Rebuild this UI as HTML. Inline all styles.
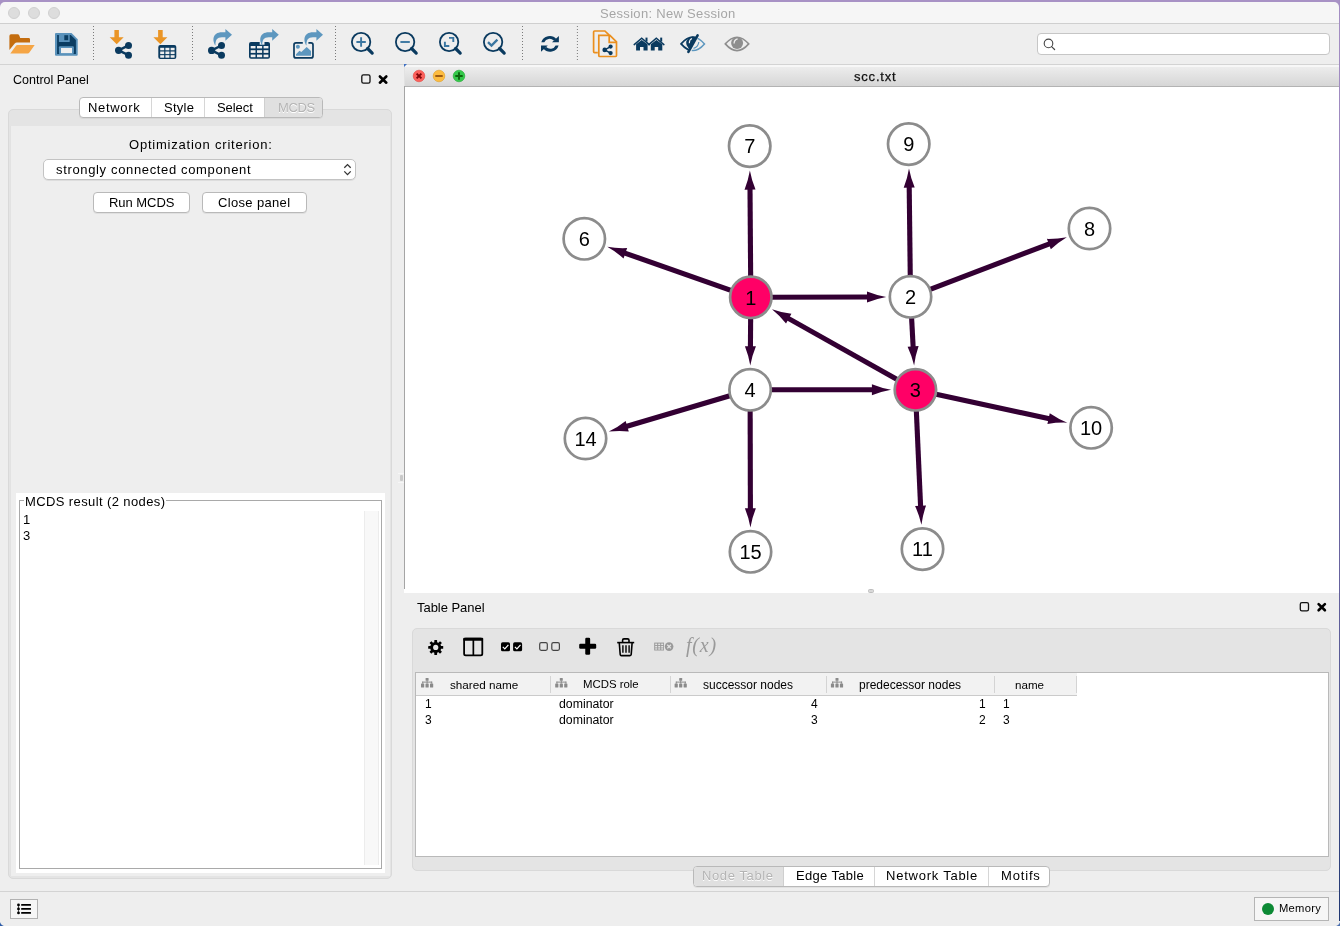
<!DOCTYPE html>
<html><head><meta charset="utf-8">
<style>
*{margin:0;padding:0;box-sizing:border-box}
html,body{-webkit-font-smoothing:antialiased;width:1340px;height:926px;overflow:hidden;background:#eeeeee;font-family:"Liberation Sans",sans-serif;color:#000;position:relative}
.a{position:absolute}
.t{position:absolute;white-space:nowrap;line-height:1;will-change:transform}
.tl{position:absolute;width:12px;height:12px;border-radius:50%;background:#dddddd;border:1px solid #d0d0d0}
.sep{position:absolute;top:36px;width:1px;height:32px;background:repeating-linear-gradient(#7d7d7d 0 1px,transparent 1px 4px)}
.btn{position:absolute;background:#fff;border:1px solid #b9b9b9;border-radius:4px;box-shadow:0 1px 0 rgba(0,0,0,.06)}
</style></head><body>
<!-- desktop edges -->
<div class="a" style="left:0;top:0;width:1340px;height:8px;background:#a892c5"></div>
<div class="a" style="left:1339px;top:0;width:1px;height:926px;background:linear-gradient(#a48ec3 0,#9a86bd 25%,#5f5d98 35%,#6a64a0 60%,#4d5590 80%,#1d3570 100%)"></div>
<!-- title bar -->
<div class="a" style="left:0;top:2px;width:1339px;height:22px;background:#f6f6f6;border-radius:5px 5px 0 0"></div>
<div class="a" style="left:0;top:23px;width:1339px;height:1px;background:#cfcfcf"></div>
<div class="tl" style="left:8px;top:7px"></div>
<div class="tl" style="left:28px;top:7px"></div>
<div class="tl" style="left:48px;top:7px"></div>
<div class="t" style="left:600.2px;top:6.8px;font-size:13px;letter-spacing:0.31px;color:#a6a6a6">Session: New Session</div>
<!-- toolbar -->
<div class="a" style="left:0;top:64px;width:1339px;height:1px;background:#d3d3d3"></div>
<div id="toolbar"></div>
<div class="a" style="left:1037px;top:33px;width:293px;height:22px;background:#fff;border:1px solid #c6c6c6;border-radius:4px"></div>
<svg class="a" style="left:1040px;top:36px" width="20" height="16" viewBox="1040 36 20 16"><circle cx="1048.5" cy="43.4" r="4.3" fill="none" stroke="#444" stroke-width="1.1"/><path d="M1051.6,46.6 L1054.6,49.5" stroke="#444" stroke-width="1.2" stroke-linecap="round"/></svg>

<!-- control panel -->
<div class="t" style="left:13px;top:74px;font-size:12.5px">Control Panel</div>
<div class="a" style="left:8px;top:109px;width:384px;height:770px;border:1px solid #d9d9d9;border-radius:5px;background:#e4e4e4"></div>
<div class="a" style="left:10px;top:126px;width:380px;height:750px;background:#eeeeee;border-left:1px solid #e2e2e2"></div>

<!-- network view -->
<div class="a" style="left:404px;top:65px;width:935px;height:22px;background:linear-gradient(#efefef,#d6d6d6);border-bottom:1px solid #b3b3b3"></div>
<div class="a" style="left:404px;top:87px;width:935px;height:506px;background:#fff"></div>
<div class="a" style="left:404px;top:86px;width:1px;height:503px;background:#a5a5a5"></div>
<div class="a" style="left:404px;top:65px;width:1px;height:21px;background:#e2e2e2"></div>

<!-- table panel -->
<div class="t" style="left:417.3px;top:601.2px;font-size:13px;letter-spacing:-0.04px">Table Panel</div>
<div class="a" style="left:412px;top:628px;width:919px;height:243px;border:1px solid #d9d9d9;border-radius:5px;background:#e4e4e4"></div>
<div class="a" style="left:415px;top:672px;width:914px;height:185px;background:#fff;border:1px solid #b9b9b9"></div>

<!-- status bar -->
<div class="a" style="left:0;top:891px;width:1339px;height:1px;background:#d3d3d3"></div>
<div class="a" style="left:0;top:921px;width:5px;height:5px;background:radial-gradient(circle at 5px 0,#eeeeee 4.6px,#2f5da8 5.4px)"></div>
<div class="a" style="left:1335px;top:921px;width:5px;height:5px;background:radial-gradient(circle at 0 0,#eeeeee 4.6px,#4a6fb0 5.4px)"></div>
<!--BEGIN GRAPH-->
<svg class="a" style="left:0;top:0;will-change:transform" width="1340" height="926" viewBox="0 0 1340 926">
<g fill="#330033" stroke="none">
<path d="M753.35,297.28 L752.55,187.58 L747.45,187.62 L748.25,297.32Z"/>
<path d="M749.88,170.40 Q751.60,179.99 755.52,189.56 L744.52,189.64 Q748.30,180.01 749.88,170.40Z"/>
<path d="M751.65,294.89 L624.30,250.15 L622.61,254.96 L749.95,299.71Z"/>
<path d="M607.23,246.86 Q616.83,248.48 627.16,248.03 L623.52,258.41 Q615.74,251.59 607.23,246.86Z"/>
<path d="M750.81,299.85 L869.01,299.48 L868.99,294.38 L750.79,294.75Z"/>
<path d="M886.20,296.88 Q876.61,298.56 867.02,302.44 L866.98,291.44 Q876.60,295.26 886.20,296.88Z"/>
<path d="M748.25,297.28 L747.86,348.28 L752.96,348.32 L753.35,297.32Z"/>
<path d="M750.28,365.50 Q748.71,355.89 744.93,346.26 L755.93,346.34 Q752.01,355.91 750.28,365.50Z"/>
<path d="M913.05,296.77 L911.74,185.57 L906.64,185.63 L907.95,296.83Z"/>
<path d="M908.99,168.40 Q910.75,177.98 914.71,187.53 L903.71,187.66 Q907.45,178.02 908.99,168.40Z"/>
<path d="M911.41,299.18 L1051.64,245.68 L1049.82,240.91 L909.59,294.42Z"/>
<path d="M1066.80,237.16 Q1058.42,242.13 1050.82,249.15 L1046.90,238.87 Q1057.24,239.04 1066.80,237.16Z"/>
<path d="M907.95,296.93 L910.67,348.49 L915.76,348.22 L913.05,296.67Z"/>
<path d="M914.12,365.53 Q911.97,356.03 907.62,346.65 L918.60,346.07 Q915.26,355.86 914.12,365.53Z"/>
<path d="M916.65,387.58 L788.23,315.41 L785.73,319.85 L914.15,392.02Z"/>
<path d="M771.98,309.20 Q781.16,312.47 791.42,313.82 L786.03,323.41 Q779.54,315.35 771.98,309.20Z"/>
<path d="M914.86,392.29 L1050.00,421.52 L1051.08,416.53 L915.94,387.31Z"/>
<path d="M1067.35,422.66 Q1057.62,422.25 1047.42,423.98 L1049.75,413.23 Q1058.31,419.02 1067.35,422.66Z"/>
<path d="M912.85,389.91 L918.10,507.75 L923.20,507.53 L917.95,389.69Z"/>
<path d="M921.42,524.82 Q919.34,515.31 915.07,505.89 L926.06,505.40 Q922.64,515.16 921.42,524.82Z"/>
<path d="M750.10,392.35 L873.90,392.35 L873.90,387.25 L750.10,387.25Z"/>
<path d="M891.10,389.80 Q881.50,391.45 871.90,395.30 L871.90,384.30 Q881.50,388.15 891.10,389.80Z"/>
<path d="M749.38,387.35 L624.57,424.28 L626.02,429.17 L750.82,392.25Z"/>
<path d="M608.80,431.61 Q617.54,427.30 625.65,420.88 L628.77,431.43 Q618.48,430.46 608.80,431.61Z"/>
<path d="M747.55,389.81 L747.85,510.31 L752.95,510.29 L752.65,389.79Z"/>
<path d="M750.44,527.50 Q748.77,517.90 744.89,508.31 L755.89,508.29 Q752.07,517.90 750.44,527.50Z"/>
</g>
<circle cx="750.8" cy="297.3" r="20.7" fill="#ff0066" stroke="#8c8c8c" stroke-width="2.7"/>
<circle cx="910.5" cy="296.8" r="20.7" fill="#ffffff" stroke="#8c8c8c" stroke-width="2.7"/>
<circle cx="915.4" cy="389.8" r="20.7" fill="#ff0066" stroke="#8c8c8c" stroke-width="2.7"/>
<circle cx="750.1" cy="389.8" r="20.7" fill="#ffffff" stroke="#8c8c8c" stroke-width="2.7"/>
<circle cx="584.3" cy="238.8" r="20.7" fill="#ffffff" stroke="#8c8c8c" stroke-width="2.7"/>
<circle cx="749.7" cy="146.1" r="20.7" fill="#ffffff" stroke="#8c8c8c" stroke-width="2.7"/>
<circle cx="1089.5" cy="228.5" r="20.7" fill="#ffffff" stroke="#8c8c8c" stroke-width="2.7"/>
<circle cx="908.7" cy="144.1" r="20.7" fill="#ffffff" stroke="#8c8c8c" stroke-width="2.7"/>
<circle cx="1091.1" cy="427.8" r="20.7" fill="#ffffff" stroke="#8c8c8c" stroke-width="2.7"/>
<circle cx="922.5" cy="549.1" r="20.7" fill="#ffffff" stroke="#8c8c8c" stroke-width="2.7"/>
<circle cx="585.5" cy="438.5" r="20.7" fill="#ffffff" stroke="#8c8c8c" stroke-width="2.7"/>
<circle cx="750.5" cy="551.8" r="20.7" fill="#ffffff" stroke="#8c8c8c" stroke-width="2.7"/>
<g font-family="Liberation Sans" font-size="20" text-anchor="middle" fill="#000">
<text x="750.8" y="304.5">1</text>
<text x="910.5" y="304.0">2</text>
<text x="915.4" y="397.0">3</text>
<text x="750.1" y="397.0">4</text>
<text x="584.3" y="246.0">6</text>
<text x="749.7" y="153.3">7</text>
<text x="1089.5" y="235.7">8</text>
<text x="908.7" y="151.3">9</text>
<text x="1091.1" y="435.0">10</text>
<text x="922.5" y="556.3">11</text>
<text x="585.5" y="445.7">14</text>
<text x="750.5" y="559.0">15</text>
</g></svg>
<!--END GRAPH-->
<!--BEGIN TOOLBAR-->
<svg class="a" style="left:0;top:24px" width="780" height="40" viewBox="0 24 780 40">
<defs>
<g id="share"><circle cx="0" cy="0" r="3.6"/><circle cx="9.9" cy="-4.9" r="3.5"/><circle cx="9.9" cy="4.9" r="3.5"/><path d="M0,0 L9.9,-4.9 M0,0 L9.9,4.9" stroke="#0a3a5f" stroke-width="2.4"/></g>
<g id="tbl"><rect x="0" y="0" width="18" height="14" rx="2" fill="#0a3a5f"/>
<g fill="#eeeeee"><rect x="1.9" y="2.8" width="4" height="2.5"/><rect x="7.1" y="2.8" width="4" height="2.5"/><rect x="12.3" y="2.8" width="4" height="2.5"/>
<rect x="1.9" y="6.5" width="4" height="2.6"/><rect x="7.1" y="6.5" width="4" height="2.6"/><rect x="12.3" y="6.5" width="4" height="2.6"/>
<rect x="1.9" y="10.2" width="4" height="2.5"/><rect x="7.1" y="10.2" width="4" height="2.5"/><rect x="12.3" y="10.2" width="4" height="2.5"/></g></g>
<path id="curv" d="M0,0 C-3.3,-4.6 -3.5,-13.3 6.5,-13.3 L9.9,-13.3 L9.9,-16.6 L16.5,-10.8 L9.9,-4.8 L9.9,-8.3 L6.5,-8.3 C1.5,-8.3 -0.2,-5.6 0,0 Z"/>
<path id="dots" d="M0,26 V60" stroke="#7a7a7a" stroke-width="1" stroke-dasharray="1 2"/>
</defs>
<!-- folder -->
<path d="M9.4,36 Q9.4,34.3 11,34.3 L17.6,34.3 Q18.8,34.3 19.3,35.5 L20.2,37.9 L28.6,37.9 Q30,37.9 30,39.3 L30,42.6 L17,42.6 Q15.5,42.6 14.5,43.8 L9.4,50 Z" fill="#c46d0f"/>
<path d="M17.5,45 L34.7,45 L29.4,52.4 Q28.8,53.4 27.5,53.4 L10.3,53.4 L15.8,46 Q16.4,45 17.5,45 Z" fill="#f5a545"/>
<!-- floppy -->
<path d="M55,34 Q55,33 56,33 L71.5,33 L77.7,39.3 L77.7,54.8 Q77.7,55.8 76.7,55.8 L56,55.8 Q55,55.8 55,54.8 Z" fill="#5a92bb"/>
<path d="M57.1,34.9 L70.8,34.9 L75.9,40 L75.9,54 L57.1,54 Z" fill="#0b3d62"/>
<rect x="58.9" y="34.9" width="10.8" height="7.1" rx="0.6" fill="#5a92bb"/>
<rect x="64.3" y="35.2" width="3.9" height="5" fill="#0b3d62"/>
<rect x="58.9" y="46.2" width="15" height="7.8" rx="1" fill="#5a92bb"/>
<rect x="61" y="48" width="11" height="5.1" fill="#efefef"/>
<use href="#dots" x="93.5"/>
<!-- import network -->
<path d="M114.4,29.9 H118.9 V37.3 H123.7 L116.7,44.2 L109.7,37.3 H114.4 Z" fill="#ea9526"/>
<g fill="#0a3a5f"><use href="#share" x="118.6" y="50.3"/></g>
<!-- import table -->
<path d="M158.1,29.9 H162.7 V37.3 H167.4 L160.4,44.2 L153.4,37.3 H158.1 Z" fill="#ea9526"/>
<use href="#tbl" x="158.3" y="45"/>
<use href="#dots" x="192.5"/>
<!-- export network -->
<g fill="#0a3a5f"><use href="#share" x="211.6" y="50.4"/></g>
<use href="#curv" x="215.5" y="45.6" fill="#5d97bf"/>
<!-- export table -->
<rect x="249" y="42.1" width="21" height="16.7" rx="2" fill="#0a3a5f"/>
<g fill="#eeeeee"><rect x="250.7" y="46" width="4.8" height="2.4"/><rect x="257" y="46" width="5.1" height="2.4"/><rect x="263.6" y="46" width="4.8" height="2.4"/>
<rect x="250.7" y="50.2" width="4.8" height="2.7"/><rect x="257" y="50.2" width="5.1" height="2.7"/><rect x="263.6" y="50.2" width="4.8" height="2.7"/>
<rect x="250.7" y="54.6" width="4.8" height="2.6"/><rect x="257" y="54.6" width="5.1" height="2.6"/><rect x="263.6" y="54.6" width="4.8" height="2.6"/></g>
<rect x="259.7" y="41.5" width="4.8" height="3.2" fill="#eeeeee"/>
<use href="#curv" x="262.3" y="45.6" fill="#5d97bf"/>
<!-- export image -->
<rect x="294" y="42.9" width="19" height="15" rx="2" fill="none" stroke="#0a3a5f" stroke-width="1.7"/>
<rect x="302.8" y="41.5" width="5.6" height="3" fill="#eeeeee"/>
<circle cx="297.9" cy="46.8" r="2" fill="#5d97bf"/>
<path d="M296,55.8 L296,54.3 L299.5,50.8 L301.3,52.1 L306.7,47 L311,51 L311,55.8 Z" fill="#5d97bf"/>
<use href="#curv" x="306.5" y="45.6" fill="#5d97bf"/>
<use href="#dots" x="335.5"/>
<!-- zoom in/out/fit/sel -->
<g fill="none" stroke="#0a3a5f">
<circle cx="361.1" cy="42" r="9.2" stroke-width="1.8"/><path d="M367.6,48.5 L372.2,53.1" stroke-width="3.2" stroke-linecap="round"/>
<circle cx="405.1" cy="42" r="9.2" stroke-width="1.8"/><path d="M411.6,48.5 L416.2,53.1" stroke-width="3.2" stroke-linecap="round"/>
<circle cx="449.1" cy="42" r="9.2" stroke-width="1.8"/><path d="M455.6,48.5 L460.2,53.1" stroke-width="3.2" stroke-linecap="round"/>
<circle cx="493.1" cy="42" r="9.2" stroke-width="1.8"/><path d="M499.6,48.5 L504.2,53.1" stroke-width="3.2" stroke-linecap="round"/>
</g>
<g fill="none" stroke="#3a76a1" stroke-width="1.9">
<path d="M356.4,42 H365.8 M361.1,37.3 V46.7"/>
<path d="M400.4,42 H409.8"/>
<path d="M449,37.9 H453.3 V42.1 M444.9,41.8 V46 H449.3"/>
<path d="M488,42.1 L491.5,45.6 L497.4,39.6" stroke-width="2.3"/>
</g>
<use href="#dots" x="522.5"/>
<!-- refresh -->
<g fill="#0a3a5f">
<path d="M541.3,42.3 A8.8,8.8 0 0 1 556.5,39.2 L553.7,40.6 A5.8,5.8 0 0 0 544.3,42.3 Z"/>
<path d="M552,42.2 L558.9,42.2 L558.9,35.9 Z"/>
<path d="M558.6,45.4 A8.8,8.8 0 0 1 543.4,48.5 L546.2,47.1 A5.8,5.8 0 0 0 555.6,45.4 Z"/>
<path d="M547.8,45.5 L541,45.5 L541,51.8 Z"/>
</g>
<use href="#dots" x="577.4"/>
<!-- doc share -->
<g fill="none" stroke="#ea8f1e" stroke-width="1.7">
<path d="M597.8,52.6 H594.6 Q593.6,52.6 593.6,51.6 V32 Q593.6,31 594.6,31 H604.9 L609.2,35.2"/>
<path d="M598.8,35.3 H609.9 L616.5,41.9 V55.6 Q616.5,56.5 615.5,56.5 H599.8 Q598.8,56.5 598.8,55.5 Z"/>
<path d="M609.2,35.3 V42.3 H616.5"/>
</g>
<g fill="#0a3a5f"><circle cx="604.7" cy="49.9" r="2.3"/><circle cx="610.6" cy="46.6" r="2.1"/><circle cx="610.6" cy="53.1" r="2.1"/><path d="M604.7,49.9 L610.6,46.6 M604.7,49.9 L610.6,53.1" stroke="#0a3a5f" stroke-width="1.5"/></g>
<!-- homes -->
<g fill="#0a3a5f">
<path d="M634.2,44.6 L641.7,38.2 L649.3,44.6" fill="none" stroke="#0a3a5f" stroke-width="1.5" stroke-linecap="round"/>
<path d="M648.8,44.6 L656.3,38.2 L663.9,44.6" fill="none" stroke="#0a3a5f" stroke-width="1.5" stroke-linecap="round"/>
<rect x="645.5" y="37.6" width="2" height="4"/><rect x="660.2" y="37.6" width="2" height="4"/>
<path d="M636.1,44.3 L641.7,39.9 L647.6,44.3 V50.5 H643.5 V46.9 H640 V50.5 H636.1 Z"/>
<path d="M650.8,44.3 L656.4,39.9 L662.3,44.3 V50.5 H658.2 V46.9 H654.7 V50.5 H650.8 Z"/>
</g>
<!-- eye hide -->
<clipPath id="eyeL"><path d="M660,20 H704.2 L684,62 H660 Z"/></clipPath>
<clipPath id="eyeR"><path d="M706.4,20 H720 V62 H686.2 Z"/></clipPath>
<g clip-path="url(#eyeL)">
<path d="M681.1,43.9 Q692.8,30.5 704.5,43.9 Q692.8,57.3 681.1,43.9 Z" fill="none" stroke="#0a3a5f" stroke-width="1.8"/>
<circle cx="692.6" cy="43" r="6.4" fill="#0a3a5f"/>
<path d="M689.3,43.3 Q689.2,39.8 692,38.6" fill="none" stroke="#eeeeee" stroke-width="1.1"/>
</g>
<g clip-path="url(#eyeR)">
<path d="M681.1,43.9 Q692.8,30.5 704.5,43.9 Q692.8,57.3 681.1,43.9 Z" fill="none" stroke="#5d97bf" stroke-width="1.5"/>
<path d="M693.5,48.4 Q698.3,47 698.8,42" fill="none" stroke="#5d97bf" stroke-width="1.2"/>
</g>
<path d="M697.6,35.4 L688.4,51.8" stroke="#0a3a5f" stroke-width="2.6" stroke-linecap="round"/>
<!-- eye gray -->
<path d="M725.3,43.9 Q737,30.5 748.7,43.9 Q737,57.3 725.3,43.9 Z" fill="none" stroke="#8e8e8e" stroke-width="1.6"/>
<circle cx="737.1" cy="42.9" r="6" fill="#8e8e8e"/>
<path d="M734.1,43.6 Q734,39.8 737.6,38.9" fill="none" stroke="#eeeeee" stroke-width="1.3"/>
</svg>

<!--END TOOLBAR-->
<!--BEGIN CPANEL-->
<svg class="a" style="left:355px;top:70px" width="40" height="20" viewBox="355 70 40 20">
<rect x="361.8" y="74.9" width="8.2" height="8.2" rx="1.6" fill="none" stroke="#111" stroke-width="1.3"/>
<path d="M379.9,76.5 L386.3,82.7 M386.3,76.5 L379.9,82.7" stroke="#000" stroke-width="2.6" stroke-linecap="round"/>
</svg>
<!-- tabs -->
<div class="a" style="left:79px;top:97px;width:244px;height:21px;background:#fff;border:1px solid #b9b9b9;border-radius:4px;box-shadow:0 1px 0 rgba(0,0,0,.05)"></div>
<div class="a" style="left:264px;top:98px;width:58px;height:19px;background:#e0e0e0;border-left:1px solid #cfcfcf;border-radius:0 3px 3px 0"></div>
<div class="a" style="left:151px;top:98px;width:1px;height:19px;background:#d6d6d6"></div>
<div class="a" style="left:204px;top:98px;width:1px;height:19px;background:#d6d6d6"></div>
<div class="t" style="left:88.4px;top:100.8px;font-size:13px;letter-spacing:0.67px">Network</div>
<div class="t" style="left:164.3px;top:100.8px;font-size:13px;letter-spacing:0.26px">Style</div>
<div class="t" style="left:217.1px;top:100.8px;font-size:13px;letter-spacing:-0.06px">Select</div>
<div class="t" style="left:277.8px;top:100.8px;font-size:13px;letter-spacing:-0.34px;color:#b4b4b4;text-shadow:0 1px 0 #fff">MCDS</div>
<!-- criterion -->
<div class="t" style="left:129.3px;top:137.7px;font-size:13px;letter-spacing:0.78px">Optimization criterion:</div>
<div class="a" style="left:43px;top:159px;width:313px;height:21px;background:#fff;border:1px solid #c3c3c3;border-radius:5px;box-shadow:0 1px 0 rgba(0,0,0,.07)"></div>
<div class="t" style="left:56.3px;top:162.8px;font-size:13px;letter-spacing:0.65px">strongly connected component</div>
<svg class="a" style="left:340px;top:160px" width="16" height="18" viewBox="340 160 16 18">
<path d="M344.3,167.8 L347.5,164.6 L350.7,167.8 M344.3,171.4 L347.5,174.6 L350.7,171.4" fill="none" stroke="#333" stroke-width="1.3"/>
</svg>
<div class="btn" style="left:93px;top:192px;width:97px;height:21px"></div>
<div class="t" style="left:108.6px;top:195.9px;font-size:13px;letter-spacing:-0.05px">Run MCDS</div>
<div class="btn" style="left:202px;top:192px;width:105px;height:21px"></div>
<div class="t" style="left:217.5px;top:195.9px;font-size:13px;letter-spacing:0.34px">Close panel</div>
<!-- result -->
<div class="a" style="left:16px;top:493px;width:369px;height:380px;background:#fff"></div>
<div class="a" style="left:19px;top:500px;width:363px;height:369px;border:1px solid #a9a9a9"></div>
<div class="a" style="left:24px;top:494px;width:142px;height:14px;background:#fff"></div>
<div class="t" style="left:24.7px;top:494.8px;font-size:13px;letter-spacing:0.39px">MCDS result (2 nodes)</div>
<div class="t" style="left:23.4px;top:513.0px;font-size:13px;letter-spacing:0px">1</div>
<div class="t" style="left:23.4px;top:528.6px;font-size:13px;letter-spacing:0px">3</div>
<div class="a" style="left:364px;top:511px;width:15px;height:354px;background:#f8f8f8;border-left:1px solid #ececec;border-right:1px solid #ececec"></div>

<!--END CPANEL-->
<!--BEGIN NETVIEW-->
<div class="a" style="left:405px;top:65px;width:934px;height:2px;background:#f7f7f7"></div>
<svg class="a" style="left:405px;top:66px" width="70" height="20" viewBox="405 66 70 20">
<circle cx="419" cy="76" r="5.8" fill="#fc605b" stroke="#e2463f" stroke-width="0.6"/>
<path d="M416.6,73.6 L421.4,78.4 M421.4,73.6 L416.6,78.4" stroke="#7e0508" stroke-width="1.9"/>
<circle cx="439" cy="76" r="5.8" fill="#fdbc40" stroke="#dfa023" stroke-width="0.6"/>
<path d="M435.3,76 H442.7" stroke="#985712" stroke-width="1.9"/>
<circle cx="459" cy="76" r="5.8" fill="#34c84a" stroke="#1fa932" stroke-width="0.6"/>
<path d="M455.3,76 H462.7 M459,72.3 V79.7" stroke="#0b650d" stroke-width="1.9"/>
</svg>
<div class="t" style="left:853.6px;top:70.0px;font-size:13px;letter-spacing:0.8px;color:#111;-webkit-text-stroke:0.25px #111">scc.txt</div>
<div class="a" style="left:404px;top:64px;width:3px;height:3px;background:#3d6fc2;clip-path:polygon(0 0,100% 0,0 100%)"></div>
<!-- splitter handles -->
<div class="a" style="left:400px;top:475px;width:3px;height:6px;border-radius:1px;background:#c9c9c9"></div>
<div class="a" style="left:398px;top:473px;width:6px;height:1px;background:#f7f7f7"></div>
<div class="a" style="left:398px;top:482px;width:6px;height:1px;background:#f7f7f7"></div>
<div class="a" style="left:868px;top:589px;width:6px;height:4px;border-radius:1.5px;background:#d8d8d8;border:1px solid #bdbdbd"></div>

<!--END NETVIEW-->
<!--BEGIN TPANEL-->
<svg class="a" style="left:1295px;top:598px" width="40" height="20" viewBox="1295 598 40 20">
<rect x="1300.3" y="602.6" width="8.2" height="8.2" rx="1.6" fill="none" stroke="#111" stroke-width="1.3"/>
<path d="M1318.6,604.1 L1324.9,610.3 M1324.9,604.1 L1318.6,610.3" stroke="#000" stroke-width="2.6" stroke-linecap="round"/>
</svg>
<!-- table toolbar icons -->
<svg class="a" style="left:420px;top:632px;will-change:transform" width="310" height="30" viewBox="420 632 310 30">
<g transform="translate(435.7,647.2)">
<path d="M-1.6,-7.6 H1.6 L2.1,-5.4 L3.6,-4.7 L5.4,-6 L7.6,-3.8 L6.3,-1.9 L6.9,-0.4 L9,0 H9 V0" fill="none"/>
</g>
<g fill="#000">
<circle cx="435.7" cy="647.4" r="5.5"/>
<g transform="translate(435.7,647.4)">
<rect x="-1.4" y="-7.5" width="2.8" height="15" rx="0.4"/>
<rect x="-1.4" y="-7.5" width="2.8" height="15" rx="0.4" transform="rotate(45)"/>
<rect x="-1.4" y="-7.5" width="2.8" height="15" rx="0.4" transform="rotate(90)"/>
<rect x="-1.4" y="-7.5" width="2.8" height="15" rx="0.4" transform="rotate(135)"/>
</g>
</g>
<circle cx="435.7" cy="647.4" r="2.6" fill="#e4e4e4"/>
<rect x="464.1" y="638.7" width="18.2" height="16.6" rx="1.6" fill="none" stroke="#000" stroke-width="1.8"/>
<rect x="463.2" y="637.8" width="20" height="3" rx="1" fill="#000"/>
<rect x="472.5" y="638.5" width="1.7" height="17" fill="#000"/>
<rect x="501" y="642.3" width="9" height="9" rx="1.6" fill="#000"/>
<rect x="513.1" y="642.3" width="9" height="9" rx="1.6" fill="#000"/>
<path d="M502.8,646.8 L504.8,648.8 L508.4,644.8 M514.9,646.8 L516.9,648.8 L520.5,644.8" fill="none" stroke="#fff" stroke-width="1.2"/>
<rect x="539.7" y="642.7" width="7.6" height="7.6" rx="1.5" fill="none" stroke="#444" stroke-width="1.2"/>
<rect x="551.8" y="642.7" width="7.6" height="7.6" rx="1.5" fill="none" stroke="#444" stroke-width="1.2"/>
<rect x="579.2" y="643.8" width="17" height="4.9" rx="1.2" fill="#000"/><rect x="585.25" y="637.8" width="4.9" height="17" rx="1.2" fill="#000"/>
<g fill="none" stroke="#000" stroke-width="1.6">
<path d="M617.2,642.6 H634.2"/>
<path d="M622.6,642.3 V640.3 Q622.6,638.9 624,638.9 H627.6 Q629,638.9 629,640.3 V642.3"/>
<path d="M619.3,643 L620.2,654.5 Q620.3,655.6 621.4,655.6 H630 Q631.1,655.6 631.2,654.5 L632.1,643"/>
<path d="M622.9,645.3 V652.8 M626,645.3 V652.8 M629.1,645.3 V652.8" stroke-width="1.4"/>
</g>
<g fill="#999">
<rect x="654.2" y="642.6" width="9.8" height="7.9"/>
<circle cx="669.1" cy="646.6" r="4.3"/>
</g>
<g fill="#e4e4e4"><rect x="655.2" y="643.6" width="2" height="1.5"/><rect x="658.2" y="643.6" width="2" height="1.5"/><rect x="661.2" y="643.6" width="2" height="1.5"/>
<rect x="655.2" y="646" width="2" height="1.5"/><rect x="658.2" y="646" width="2" height="1.5"/><rect x="661.2" y="646" width="2" height="1.5"/>
<rect x="655.2" y="648.3" width="2" height="1.3"/><rect x="658.2" y="648.3" width="2" height="1.3"/><rect x="661.2" y="648.3" width="2" height="1.3"/></g>
<path d="M667.3,644.8 L670.9,648.4 M670.9,644.8 L667.3,648.4" stroke="#e4e4e4" stroke-width="1.3"/>
<text x="686" y="652.3" font-family="Liberation Serif" font-style="italic" font-size="20" letter-spacing="0.8" fill="#9a9a9a">f(x)</text>
</svg>
<!-- table header -->
<div class="a" style="left:416px;top:673px;width:661px;height:23px;background:#f2f2f2;border-bottom:1px solid #cbcbcb"></div>
<div class="a" style="left:550px;top:676px;width:1px;height:17px;background:#d4d4d4"></div>
<div class="a" style="left:670px;top:676px;width:1px;height:17px;background:#d4d4d4"></div>
<div class="a" style="left:826px;top:676px;width:1px;height:17px;background:#d4d4d4"></div>
<div class="a" style="left:994px;top:676px;width:1px;height:17px;background:#d4d4d4"></div>
<div class="a" style="left:1076px;top:676px;width:1px;height:17px;background:#d4d4d4"></div>
<svg class="a" style="left:0;top:0" width="850" height="700" viewBox="0 0 850 700">
<defs><g id="hier" fill="#8a8a8a"><rect x="4.6" y="0" width="3" height="2.8" rx="0.6"/><rect x="1.2" y="3.6" width="10" height="1"/><rect x="1.2" y="3.6" width="1" height="2"/><rect x="5.6" y="2.5" width="1" height="3"/><rect x="10.2" y="3.6" width="1" height="2"/><rect x="0" y="5.5" width="3.2" height="4" rx="0.6"/><rect x="4.5" y="5.5" width="3.2" height="4" rx="0.6"/><rect x="9" y="5.5" width="3.2" height="4" rx="0.6"/></g></defs>
<use href="#hier" x="421" y="678"/><use href="#hier" x="555.2" y="678"/><use href="#hier" x="674.6" y="678"/><use href="#hier" x="830.9" y="678"/>
</svg>
<div class="t" style="left:449.5px;top:679px;font-size:11.7px">shared name</div>
<div class="t" style="left:583px;top:679px;font-size:11.4px">MCDS role</div>
<div class="t" style="left:703px;top:679px;font-size:12px">successor nodes</div>
<div class="t" style="left:859.3px;top:679px;font-size:12px">predecessor nodes</div>
<div class="t" style="left:1015px;top:679px;font-size:11.6px">name</div>
<!-- rows -->
<div class="t" style="left:425px;top:698px;font-size:12px">1</div>
<div class="t" style="left:559px;top:698px;font-size:12.3px">dominator</div>
<div class="t" style="left:811px;top:698px;font-size:12px">4</div>
<div class="t" style="left:978.5px;top:698px;font-size:12px">1</div>
<div class="t" style="left:1002.5px;top:698px;font-size:12px">1</div>
<div class="t" style="left:425px;top:714px;font-size:12px">3</div>
<div class="t" style="left:559px;top:714px;font-size:12.3px">dominator</div>
<div class="t" style="left:811px;top:714px;font-size:12px">3</div>
<div class="t" style="left:978.5px;top:714px;font-size:12px">2</div>
<div class="t" style="left:1002.5px;top:714px;font-size:12px">3</div>
<!-- bottom tabs -->
<div class="a" style="left:693px;top:866px;width:357px;height:21px;background:#fff;border:1px solid #b9b9b9;border-radius:4px;box-shadow:0 1px 0 rgba(0,0,0,.05)"></div>
<div class="a" style="left:694px;top:867px;width:90px;height:19px;background:#e0e0e0;border-right:1px solid #cfcfcf;border-radius:3px 0 0 3px"></div>
<div class="a" style="left:874px;top:867px;width:1px;height:19px;background:#d6d6d6"></div>
<div class="a" style="left:988px;top:867px;width:1px;height:19px;background:#d6d6d6"></div>
<div class="t" style="left:701.7px;top:868.7px;font-size:13px;letter-spacing:0.61px;color:#b4b4b4;text-shadow:0 1px 0 #fff">Node Table</div>
<div class="t" style="left:795.5px;top:868.7px;font-size:13px;letter-spacing:0.33px">Edge Table</div>
<div class="t" style="left:886.4px;top:868.7px;font-size:13px;letter-spacing:0.76px">Network Table</div>
<div class="t" style="left:1000.6px;top:868.7px;font-size:13px;letter-spacing:0.83px">Motifs</div>
<!-- status bar -->
<div class="a" style="left:10px;top:899px;width:28px;height:20px;background:#f6f6f6;border:1px solid #b2b2b2"></div>
<svg class="a" style="left:10px;top:899px" width="28" height="20" viewBox="10 899 28 20">
<g fill="#000"><circle cx="18.5" cy="904.9" r="1.4"/><circle cx="18.5" cy="908.9" r="1.4"/><circle cx="18.5" cy="912.9" r="1.4"/>
<rect x="21.1" y="904.1" width="9.9" height="1.7" rx="0.5"/><rect x="21.1" y="908" width="9.9" height="1.7" rx="0.5"/><rect x="21.1" y="912" width="9.9" height="1.7" rx="0.5"/>
<rect x="18.2" y="904.5" width="0.6" height="9"/></g>
</svg>
<div class="a" style="left:1254px;top:897px;width:75px;height:24px;background:#f6f6f6;border:1px solid #b5b5b5"></div>
<div class="a" style="left:1262px;top:903px;width:12px;height:12px;border-radius:50%;background:#0d8a35"></div>
<div class="t" style="left:1278.8px;top:903.4px;font-size:11.2px;letter-spacing:0.28px">Memory</div>

<!--END TPANEL-->
</body></html>
